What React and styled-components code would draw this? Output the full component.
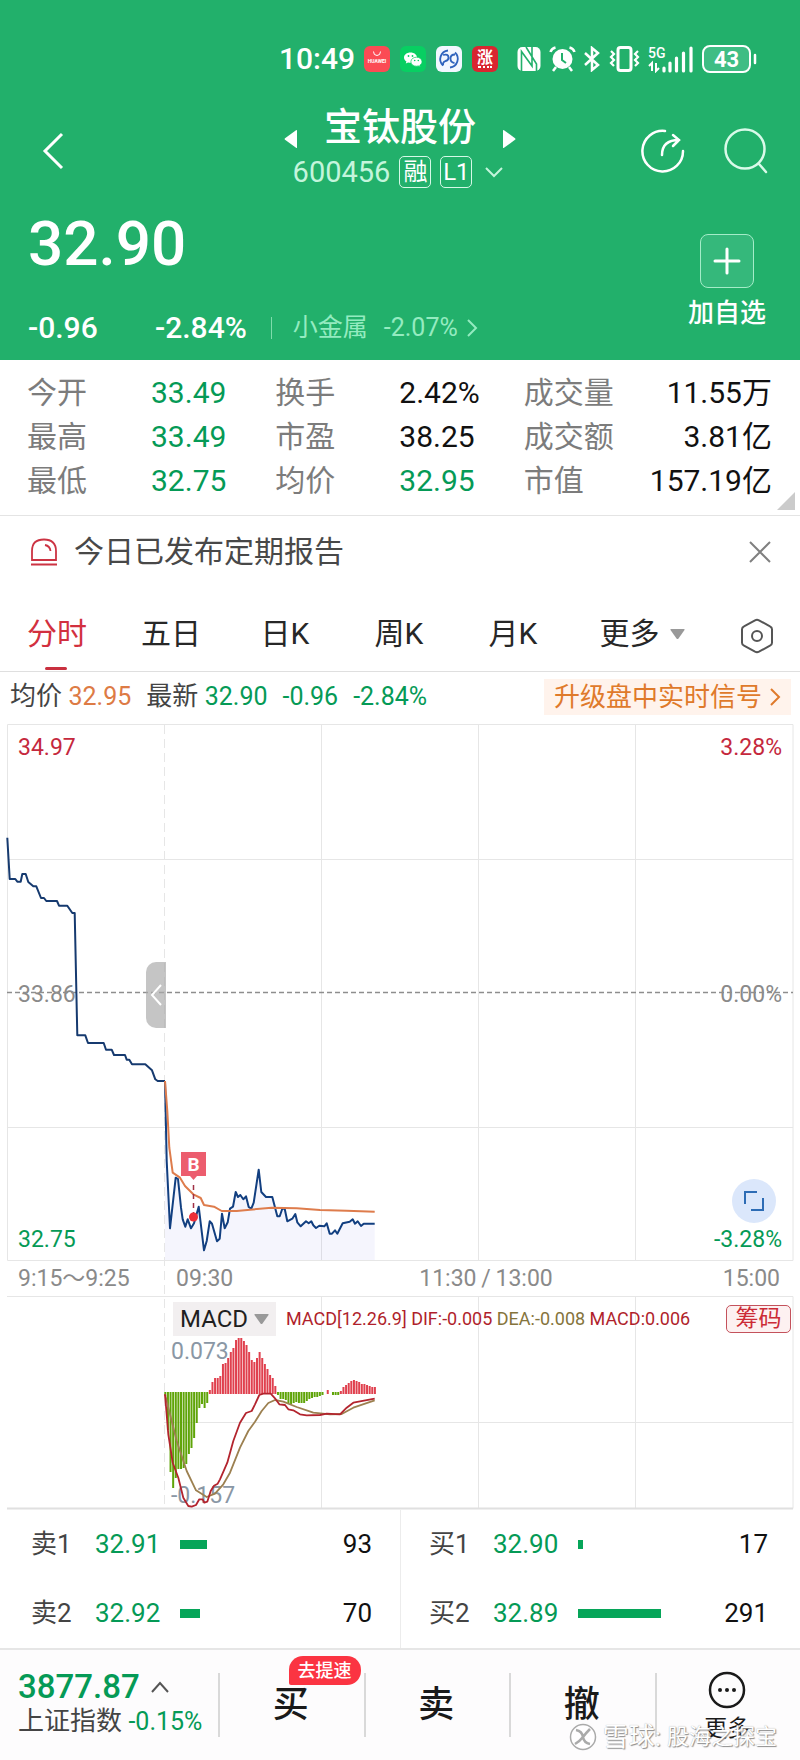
import React from 'react'
import styled, { createGlobalStyle } from 'styled-components'

const GREEN = `#059a56`
const RED = `#c5283d`
const FONT = `Roboto, "Noto Sans CJK SC", sans-serif`

const GlobalStyle = createGlobalStyle`
  * {
    box-sizing: border-box;
  }
  body {
    margin: 0;
    background: #fff;
    color: #1f1f1f;
    font-family: ${FONT};
  }
  button {
    margin: 0;
    padding: 0;
    border: 0;
    background: none;
    color: inherit;
    font: inherit;
    cursor: pointer;
  }
  a {
    color: inherit;
    text-decoration: none;
  }
  svg {
    display: block;
    flex: none;
  }
`

/* ---------- header ---------- */

const Header = styled.header`
  background: #22b06b;
  color: #fff;
`

const StatusBar = styled.div`
  display: flex;
  align-items: center;
  justify-content: flex-end;
  height: 102px;
  padding: 16px 43px 0 0;
`

const Clock = styled.time`
  margin-right: 9px;
  font-size: 30px;
  font-weight: 500;
  line-height: 32px;
`

const AppTiles = styled.div`
  display: flex;
  gap: 10px;
  margin-right: 19px;
`

const SystemIcons = styled.div`
  display: flex;
  align-items: center;
  gap: 8px;
`

const TitleBar = styled.div`
  display: grid;
  grid-template-columns: 1fr auto 1fr;
  align-items: center;
  min-height: 98px;
  padding: 0 31px;
`

const BackButton = styled.button`
  justify-self: start;
  padding-left: 11px;
`

const StockTitle = styled.div`
  align-self: start;
`

const NameRow = styled.div`
  display: flex;
  align-items: flex-end;
  justify-content: center;
  gap: 26px;

  h1 {
    margin: 0;
    font-size: 38px;
    font-weight: 500;
    line-height: 50px;
  }
  button {
    padding-bottom: 3px;
  }
`

const CodeRow = styled.div`
  display: flex;
  align-items: center;
  justify-content: center;
  gap: 9px;
  margin-top: 4px;
  color: #c4f5dc;
  font-size: 29px;
  line-height: 32px;
`

const Tag = styled.span`
  width: 32px;
  height: 32px;
  border: 1px solid #d6f9e7;
  border-radius: 5px;
  color: #fff;
  font-size: 24px;
  line-height: 30px;
  text-align: center;
`

const TitleActions = styled.div`
  display: flex;
  gap: 38px;
  justify-self: end;
`

const PriceBar = styled.div`
  display: flex;
  justify-content: space-between;
  padding: 0 34px 12px 28px;
`

const Price = styled.div`
  font-size: 62px;
  font-weight: 500;
  line-height: 88px;
`

const ChangeRow = styled.div`
  display: flex;
  align-items: center;
  margin-top: 20px;
  font-size: 30px;
  font-weight: 500;
  line-height: 40px;
`

const Change = styled.span`
  width: 127px;
`

const SectorLink = styled.a`
  display: flex;
  align-items: center;
  gap: 16px;
  margin-left: 24px;
  padding-left: 22px;
  background: linear-gradient(#7edcab, #7edcab) no-repeat left center / 1px 22px;
  color: #94ebc0;
  font-size: 25px;
  font-weight: 400;

  svg {
    margin-left: -8px;
  }
`

const AddButton = styled.button`
  display: flex;
  flex-direction: column;
  align-items: center;
  gap: 5px;
  padding-top: 34px;
  font-size: 26px;
  font-weight: 500;
  line-height: 40px;
`

const AddBox = styled.span`
  display: grid;
  place-items: center;
  width: 54px;
  height: 54px;
  border: 1px solid #a4ecc8;
  border-radius: 8px;
  background: #35b87b;
`

/* ---------- quote table ---------- */

const Quotes = styled.dl`
  position: relative;
  display: grid;
  grid-template-columns: repeat(3, 1fr);
  margin: 0;
  padding: 11px 28px 12px 27px;
  border-bottom: 1px solid #e4e4e4;
`

const Quote = styled.div`
  display: flex;
  justify-content: ${(props) => props.$spread ? `space-between` : `flex-start`};
  font-size: 30px;
  line-height: 44px;

  dt {
    min-width: 124px;
    color: #7c7c7c;
  }
  dd {
    margin: 0;
    color: ${(props) => props.$down ? GREEN : `#111`};
  }
`

const Corner = styled.svg`
  position: absolute;
  right: 5px;
  bottom: 5px;
`

const Notice = styled.section`
  display: flex;
  align-items: center;
  gap: 16px;
  padding: 14px 29px 14px 30px;
  color: #484848;
  font-size: 30px;
  line-height: 44px;

  p {
    flex: 1;
    margin: 0;
  }
`

/* ---------- tabs ---------- */

const Tabs = styled.nav`
  display: grid;
  grid-template-columns: repeat(5, 1fr) 144px 86px;
  place-items: center;
  margin-top: 12px;
  border-bottom: 1px solid #dfdfdf;
`

const Tab = styled.button`
  position: relative;
  display: flex;
  align-items: center;
  gap: 10px;
  padding: 12px 0 15px;
  color: ${(props) => props.$active ? `#d2303f` : `#272727`};
  font-size: 30px;
  line-height: 44px;

  &::after {
    content: '';
    position: absolute;
    bottom: 1px;
    left: 18px;
    width: 22px;
    height: 3px;
    border-radius: 2px;
    background: ${(props) => props.$active ? `#c9303f` : `transparent`};
  }
`

const Legend = styled.div`
  display: flex;
  align-items: center;
  gap: 15px;
  padding: 6px 9px 6px 10px;
  color: #444;
  font-size: 26px;
  line-height: 36px;
`

const Figure = styled.span`
  color: ${(props) => props.$color || GREEN};
  font-size: 25px;
`

const UpgradeLink = styled.a`
  display: flex;
  align-items: center;
  gap: 7px;
  margin-left: auto;
  padding: 0 10px;
  background: #fff3ec;
  color: #df7a2b;
`

/* ---------- chart ---------- */

const ChartArea = styled.section`
  position: relative;
`

const ChartSvg = styled.svg`
  width: 100%;
  height: auto;
  font-family: ${FONT};
  font-size: 23px;
`

const Handle = styled.button`
  position: absolute;
  top: 241px;
  left: 146px;
  display: grid;
  place-items: center;
  width: 20px;
  height: 66px;
  border-radius: 10px 0 0 10px;
  background: rgba(170, 170, 170, 0.68);
`

const ExpandButton = styled.button`
  position: absolute;
  top: 458px;
  right: 24px;
  display: grid;
  place-items: center;
  width: 44px;
  height: 44px;
  border-radius: 50%;
  background: #dbe7fb;
`

const IndicatorButton = styled.button`
  position: absolute;
  top: 581px;
  left: 173px;
  display: flex;
  align-items: center;
  gap: 6px;
  padding: 0 7px;
  background: #f2eff0;
  font-size: 24px;
  line-height: 34px;
`

const ChipsButton = styled.button`
  position: absolute;
  top: 584px;
  right: 9px;
  width: 65px;
  border: 1px solid #c4525c;
  border-radius: 5px;
  background: #fdf1f1;
  color: #cc2b36;
  font-size: 23px;
  line-height: 26px;
`

/* ---------- order book ---------- */

const Book = styled.section`
  display: grid;
  grid-template-columns: 1fr 1fr;
  border-bottom: 2px solid #e6e6e6;
`

const BookSide = styled.div`
  padding: 0 ${(props) => props.$bid ? `32px 0 28px` : `28px 0 31px`};
  border-left: ${(props) => props.$bid ? `1px solid #ececec` : `0`};
`

const Order = styled.div`
  display: grid;
  grid-template-columns: 64px 85px 1fr auto;
  align-items: center;
  color: #444;
  font-size: 26px;
  line-height: 69px;
`

const OrderPrice = styled.span`
  color: ${GREEN};
`

const OrderBar = styled.span`
  height: 9px;
  background: #06a559;
`

const OrderVolume = styled.span`
  color: #111;
`

/* ---------- bottom bar ---------- */

const BottomBar = styled.footer`
  position: relative;
  display: grid;
  grid-template-columns: 218px repeat(4, 1fr);
  align-items: start;
  min-height: 111px;
  background: #fdfcfd;
`

const IndexBox = styled.div`
  padding: 18px 0 0 18px;
  color: #444;
  font-size: 26px;
  line-height: 30px;
`

const IndexValue = styled.div`
  display: flex;
  align-items: center;
  gap: 11px;
  color: ${GREEN};
  font-size: 33px;
  font-weight: 500;
  line-height: 38px;
`

const TradeButton = styled.button`
  position: relative;
  padding-top: 23px;
  background: linear-gradient(#d9d9d9, #d9d9d9) no-repeat left 23px / 2px 64px;
  color: #1a1a1a;
  font-size: 36px;
  font-weight: 500;
  line-height: 64px;
`

const SpeedBadge = styled.span`
  position: absolute;
  top: 6px;
  right: 3px;
  padding: 0 9px;
  border-radius: 14px 14px 14px 2px;
  background: #fb3442;
  color: #fff;
  font-size: 18px;
  line-height: 29px;
`

const MoreButton = styled(TradeButton)`
  display: flex;
  flex-direction: column;
  align-items: center;
  padding-top: 21px;
  font-size: 23px;
  font-weight: 400;
  line-height: 40px;
`

const Watermark = styled.div`
  position: absolute;
  right: 23px;
  bottom: 6px;
  display: flex;
  align-items: center;
  gap: 6px;
  color: #fff;
  font-size: 26px;
  line-height: 36px;
  text-shadow: 1px 1px 1px #8c8c8c, 0 0 1px #a9a9a9;

  small {
    font-size: 22px;
  }
`

/* ---------- icons ---------- */

const Chevron = ({ d, w, h, color = `currentColor`, stroke = 2 }) =>
  <svg width={w} height={h} viewBox={`0 0 ${w} ${h}`} fill="none" stroke={color} strokeWidth={stroke}>
    <path d={d} />
  </svg>

const Caret = () =>
  <svg width="15" height="10" viewBox="0 0 15 10">
    <path d="M1 0h13q1 0 .5 1L8.500 9.500q-1 1-2 0L.5 1Q0 0 1 0z" fill="#999" />
  </svg>

const Pointer = ({ flip }) =>
  <svg width="14" height="20" viewBox="0 0 14 20">
    <path d={flip ? `M1 1.500v17q0 1 1 .3l11-8q1-.8 0-1.600l-11-8q-1-.6-1 .3z` : `M13 1.500v17q0 1-1 .3L1 10.800q-1-.8 0-1.600l11-8q1-.6 1 .3z`} fill="#fff" />
  </svg>

const Tile = ({ color, children }) =>
  <svg width="26" height="26" viewBox="0 0 26 26">
    <rect width="26" height="26" rx="6" fill={color} />
    {children}
  </svg>

const StatusIcons = () =>
  <>
    <AppTiles>
      <Tile color="#fb4b54">
        <path d="M9.500 5.500q0 4 3.500 4t3.500-4" fill="none" stroke="#fff" strokeWidth="1" />
        <text x="13" y="17" fill="#fff" fontSize="5" fontWeight="700" textAnchor="middle">HUAWEI</text>
      </Tile>
      <Tile color="#08cf62">
        <path d="M10.500 6.500c-3.700 0-6.500 2.300-6.500 5.100 0 1.700.9 3 2.400 4l-.6 2 2.300-1.200c.8.200 1.600.3 2.400.3 3.600 0 6.500-2.200 6.500-5.100s-2.900-5.100-6.500-5.100z" fill="#fff" />
        <path d="M16.500 11.200c-3.200 0-5.600 2-5.600 4.500s2.400 4.500 5.600 4.500c.7 0 1.300-.1 1.900-.3l1.900 1-.5-1.700c1.400-.9 2.200-2.100 2.200-3.500 0-2.500-2.400-4.500-5.500-4.500z" fill="#fff" stroke="#08cf62" strokeWidth=".7" />
        <g fill="#08cf62">
          <circle cx="8.500" cy="10" r=".9" /><circle cx="12.500" cy="10" r=".9" />
          <circle cx="14.700" cy="14.500" r=".8" /><circle cx="18.300" cy="14.500" r=".8" />
        </g>
      </Tile>
      <Tile color="#f2f7ff">
        <g fill="none" stroke="#2f63bd" strokeWidth="1.800">
          <path d="M12 4.500A8.700 8.700 0 0 0 7 19.500M14 21.500A8.700 8.700 0 0 0 19 6.500" />
          <path d="M7 9q5.500-1.500 5.500 2.500 0 3-3 3.500-3 1-2.500 4.500M19 8.500q-4.500 0-4.500 4t4 4.500" />
        </g>
      </Tile>
      <Tile color="#d92630">
        <text x="13" y="16.500" fill="#fff" fontSize="16" fontWeight="700" textAnchor="middle">涨</text>
        <path d="M6 21h3M11 21h2M15 21h2M18 21h2" stroke="#fff" strokeWidth="2" />
      </Tile>
    </AppTiles>
    <SystemIcons>
      <svg width="24" height="26" viewBox="0 0 24 26">
        <rect x=".5" y="1" width="23" height="24" rx="5" fill="#fff" />
        <path d="M4.500 25V5.500L15 20V1M9 1l10.500 17V25" fill="none" stroke="#22b06b" strokeWidth="1.600" />
      </svg>
      <svg width="27" height="26" viewBox="0 0 27 26">
        <circle cx="13.500" cy="13" r="10" fill="#fff" />
        <path d="M13 7v7l4 3" fill="none" stroke="#22b06b" strokeWidth="2" />
        <path d="M1.500 6q1-3.500 5-4.500M25.500 6q-1-3.500-5-4.500M7 21l-3 4M20 21l3 4" fill="none" stroke="#fff" strokeWidth="2.500" />
      </svg>
      <svg width="17" height="26" viewBox="0 0 17 26" fill="none" stroke="#fff" strokeWidth="2.500">
        <path d="M1 7l13 12-6 5V2l6 5L1 19" />
      </svg>
      <svg width="31" height="26" viewBox="0 0 31 26" fill="none" stroke="#fff">
        <rect x="9" y="1.500" width="13" height="23" rx="2.500" strokeWidth="3" />
        <path d="M2 5l3 3-3 3 3 3-3 3 3 3M29 5l-3 3 3 3-3 3 3 3-3 3" strokeWidth="2.200" />
      </svg>
      <svg width="46" height="27" viewBox="0 0 46 27">
        <text x="0" y="12" fill="#fff" fontSize="14" fontWeight="500">5G</text>
        <path d="M4 25v-8l-3 3M8 17v8l3-3" fill="none" stroke="#fff" strokeWidth="2" />
        <path d="M16 25v-3M22 25v-8M28.500 25V12M35.500 25V7M43 25V2" fill="none" stroke="#fff" strokeWidth="3.200" strokeLinecap="round" />
      </svg>
      <svg width="55" height="28" viewBox="0 0 55 28">
        <rect x="1" y="1" width="47" height="26" rx="7" fill="#3fbd84" stroke="#fff" strokeWidth="2" />
        <path d="M53 10v8" stroke="#fff" strokeWidth="2.500" strokeLinecap="round" />
        <text x="24.500" y="22" fill="#fff" fontSize="22" fontWeight="700" textAnchor="middle">43</text>
      </svg>
    </SystemIcons>
  </>

/* ---------- data ---------- */

const QUOTES = [
  { label: `今开`, value: `33.49`, down: true },
  { label: `换手`, value: `2.42%` },
  { label: `成交量`, value: `11.55万` },
  { label: `最高`, value: `33.49`, down: true },
  { label: `市盈`, value: `38.25` },
  { label: `成交额`, value: `3.81亿` },
  { label: `最低`, value: `32.75`, down: true },
  { label: `均价`, value: `32.95`, down: true },
  { label: `市值`, value: `157.19亿` }
]

const ASKS = [
  { label: `卖1`, price: `32.91`, volume: 93 },
  { label: `卖2`, price: `32.92`, volume: 70 }
]

const BIDS = [
  { label: `买1`, price: `32.90`, volume: 17 },
  { label: `买2`, price: `32.89`, volume: 291 }
]

const AUCTION = `7.3,116.7 9.7,158 15.3,158 17.3,160.7 20.7,160.7 22.3,153 25.7,153 28.3,161 33.3,165.3 36.3,165.3
  41,177 44,177 46.3,180 57,180 59,184.7 67.3,184.7 72.3,192 74.7,192 77.3,314.3 85.3,314.3 88,322 103.7,322
  106,328.7 111.7,328.7 114,334 125,334 126.7,338.7 129.3,338.7 132,343.3 145.3,343.3 152,349.3 155.3,358.3
  157.7,360 165,360`

const PRICE = `165,360 166.7,440 170,507.3 175.7,456.7 178,458 181,486.7 182.7,498.3 185.3,505.7 187.7,498.3
  191,507.3 194,502.3 198.7,485.7 204,529.3 206.7,520 209.7,500.3 212,502.7 217,520.3 219.7,517.7 222,492.7
  224.7,507.3 227.7,501.3 230,487.7 233,485.7 235.7,471 238,476 240.3,474 243.3,478.3 246,475.3 248.7,486
  251.3,487.7 253.7,481.7 258.7,448.7 261.3,471 266,476 272.3,476 277.3,495.3 279.7,495.3 282.3,487.7
  284.7,487.7 287.3,500.3 292.3,497.7 295.3,493 297.3,501.3 300.7,505.3 306,500.3 308.7,502.3 311.3,500.3
  313.3,504.3 316,507 319.3,504.7 324.3,505.3 326.7,502.3 329.7,512.7 332,512.7 335,509.3 337.3,512.7
  342.7,502.3 349.7,500.7 352.7,498.3 355,502.7 357.7,500.3 361,505 363.7,502.7 374.7,502.7`

const AVERAGE = `165,360 167.3,390 169.3,426.7 172.7,451.7 180,456.7 185,465 193.3,473.3 200.7,477 204,484
  214,485.7 221.7,490 236.7,490 250,488.7 271.7,486.7 296.7,487.3 320,489 346.7,489.7 374.7,490.7`

const DIF = `165,673.3 168.3,713.3 172.7,741.7 178.3,756.7 183.3,776.7 188.3,785 191.7,785.7 196,784 199.3,778.3
  202.7,778.3 204.3,781.7 207.3,780.7 210.7,770 214,764.7 217.7,762.7 220,758.3 227.3,741.7 233.3,720 240,701.7
  246,692 251.7,690 255,683.3 259.3,674 263.3,672.7 270.7,672.7 275,677.3 279.3,683.3 285,684 288.3,688.3
  293.3,689.3 300,693.3 306.7,694.3 320,694 326.7,692.7 340,693.3 346.7,686.7 353.3,681.7 374.7,677.7`

const DEA = `165,673.3 170,693.3 176.7,720 186.7,750 196,769.3 206.7,776 215,772.7 223.3,763.3 230,751.7
  240,726.7 248.3,710 255,700.7 261.7,690 268.3,682 275,679 283.3,680.7 296.7,686 313.3,691.7 330,693.3
  341.7,693 353.3,686.7 374.7,679.3`

// histogram, one value per minute, positive is above the zero line
const HISTOGRAM = [
  -3, -37, -79, -95, -85, -76, -76, -75, -71, -61, -55, -45, -30, -15, -11, -15, -10,
  3, 11, 15, 15, 17, 29, 30, 35, 41, 45, 53, 55, 55, 52, 48, 41, 33, 31, 35, 41, 35, 29, 24, 18, 15, 7,
  -2, -6, -6, -7, -10, -11, -10, -9, -10, -10, -10, -8, -6, -5, -4, -4, -3, -2, 0, 3, 0, -2, -2, -2,
  2, 6, 8, 10, 12, 13, 12, 11, 9, 9, 8, 7, 6, 6
]

const ZERO = 672

const Chart = () =>
  <ChartSvg viewBox="0 0 800 789" role="img" aria-label="分时走势">
    <g fill="none" stroke="#e6e6e6">
      <path d="M7.500 3.500h785.500v536H7.500z" />
      <path d="M7 138.500h786M7 406.500h786M321.500 4v535M478.500 4v535M635.500 4v535" />
      <path d="M7 575.500h786v212M321.500 576v211M478.500 576v211M635.500 576v211M164 701.500h629" />
      <path d="M164.500 4v784" strokeDasharray="9 5" />
    </g>
    <path d="M7 787.500h786" stroke="#e0e0e0" strokeWidth="2" />

    <g fill="#8a8a8a">
      <text x="18" y="281">33.86</text>
      <text x="782" y="281" textAnchor="end">0.00%</text>
      <text x="18" y="565">9:15～9:25</text>
      <text x="176" y="565">09:30</text>
      <text x="486" y="565" textAnchor="middle">11:30{`\u2009`}/{`\u2009`}13:00</text>
      <text x="780" y="565" textAnchor="end">15:00</text>
    </g>
    <g fill={RED}>
      <text x="18" y="34">34.97</text>
      <text x="782" y="34" textAnchor="end">3.28%</text>
    </g>
    <g fill={GREEN}>
      <text x="18" y="526">32.75</text>
      <text x="782" y="526" textAnchor="end">-3.28%</text>
    </g>
    <path d="M7 271.500h786" stroke="#8e8e8e" strokeWidth="1.500" strokeDasharray="5 3" />

    <polygon points={`${PRICE} 374.7,539 165,539`} fill="#5a5adc" fillOpacity=".06" />
    <g fill="none" strokeWidth="2" strokeLinejoin="round">
      <polyline points={AUCTION} stroke="#163a6f" />
      <polyline points={PRICE} stroke="#123f80" />
      <polyline points={AVERAGE} stroke="#de7c4c" />
    </g>

    <path d="M193.500 464v28" stroke="#a03045" strokeWidth="1.500" strokeDasharray="5 4" />
    <circle cx="193.500" cy="496" r="4.500" fill="#ee2f36" />
    <path d="M181 431h25v24h-9l-3.500 4-3.500-4h-9z" fill="#ec5d6e" />
    <text x="193.500" y="450" fill="#fff" fontSize="19" fontWeight="700" textAnchor="middle">B</text>

    <g fill="#8a97a5">
      <text x="171" y="638">0.073</text>
      <text x="171" y="782">-0.157</text>
    </g>
    {HISTOGRAM.map((value, i) =>
      <rect
        key={i}
        x={164.300 + i * 2.620}
        y={value > 0 ? ZERO - value : ZERO - 1}
        width="2"
        height={value ? Math.abs(value) + 1 : 0}
        fill={value > 0 ? `#e0404e` : `#5fa408`}
      />
    )}
    <g fill="none" strokeWidth="1.800" strokeLinejoin="round">
      <polyline points={DEA} stroke="#9c8050" />
      <polyline points={DIF} stroke="#b3242e" />
    </g>
    <text x="286" y="604" fill="#b01f2c" fontSize="18">
      MACD[12.26.9] DIF:-0.005 <tspan fill="#85743c">DEA:-0.008</tspan> MACD:0.006
    </text>
  </ChartSvg>

const OrderRow = ({ label, price, volume }) =>
  <Order>
    <span>{label}</span>
    <OrderPrice>{price}</OrderPrice>
    <OrderBar style={{ width: `${Math.round(volume * 0.286)}px` }} />
    <OrderVolume>{volume}</OrderVolume>
  </Order>

const App = () =>
  <>
    <GlobalStyle />
    <Header>
      <StatusBar>
        <Clock>10:49</Clock>
        <StatusIcons />
      </StatusBar>
      <TitleBar>
        <BackButton aria-label="返回">
          <Chevron w={22} h={38} d="M20 2L3 19l17 17" stroke={3} />
        </BackButton>
        <StockTitle>
          <NameRow>
            <button aria-label="上一只"><Pointer /></button>
            <h1>宝钛股份</h1>
            <button aria-label="下一只"><Pointer flip /></button>
          </NameRow>
          <CodeRow>
            <span>600456</span>
            <Tag>融</Tag>
            <Tag>L1</Tag>
            <Chevron w={26} h={12} d="M5 2l8 8 8-8" />
          </CodeRow>
        </StockTitle>
        <TitleActions>
          <button aria-label="分享">
            <svg width="44" height="46" viewBox="0 0 44 46" fill="none" stroke="#fff" strokeWidth="2.500" strokeLinecap="round">
              <path d="M24 3A20.300 20.300 0 1 0 42 23" />
              <path d="M21 27q0-15 17-15M32 7l6 5-6 6" />
            </svg>
          </button>
          <button aria-label="搜索">
            <svg width="46" height="46" viewBox="0 0 46 46" fill="none" stroke="#d9fae9" strokeWidth="2.500" strokeLinecap="round">
              <circle cx="22" cy="21" r="19.500" />
              <path d="M36 36l7 8" />
            </svg>
          </button>
        </TitleActions>
      </TitleBar>
      <PriceBar>
        <div>
          <Price>32.90</Price>
          <ChangeRow>
            <Change>-0.96</Change>
            <span>-2.84%</span>
            <SectorLink href="#sector">
              <span>小金属</span>
              <span>-2.07%</span>
              <Chevron w={12} h={20} d="M2 2l8 8-8 8" />
            </SectorLink>
          </ChangeRow>
        </div>
        <AddButton>
          <AddBox>
            <svg width="28" height="28" viewBox="0 0 28 28" stroke="#fff" strokeWidth="3" strokeLinecap="round">
              <path d="M14 2v24M2 14h24" />
            </svg>
          </AddBox>
          加自选
        </AddButton>
      </PriceBar>
    </Header>

    <Quotes>
      {QUOTES.map((quote, i) =>
        <Quote key={quote.label} $down={quote.down} $spread={i % 3 === 2}>
          <dt>{quote.label}</dt>
          <dd>{quote.value}</dd>
        </Quote>
      )}
      <Corner width="18" height="18" viewBox="0 0 18 18"><path d="M18 0v18H0z" fill="#cbcbcb" /></Corner>
    </Quotes>

    <Notice>
      <svg width="28" height="28" viewBox="0 0 28 28" fill="none" stroke="#cc3343" strokeWidth="1.800">
        <path d="M2 22V13Q2 1.500 14 1.500T26 13v9zM1 26.500h26" />
        <path d="M15 7q5 1 5.500 6" />
      </svg>
      <p>今日已发布定期报告</p>
      <button aria-label="关闭">
        <Chevron w={22} h={22} d="M1 1l20 20M21 1L1 21" color="#808080" />
      </button>
    </Notice>

    <Tabs>
      <Tab $active>分时</Tab>
      <Tab>五日</Tab>
      <Tab>日K</Tab>
      <Tab>周K</Tab>
      <Tab>月K</Tab>
      <Tab>更多<Caret /></Tab>
      <button aria-label="设置">
        <svg width="34" height="36" viewBox="0 0 34 36" fill="none" stroke="#555" strokeWidth="2">
          <path d="M15 2.300q2-1 4 0l11 6q2 1 2 3v13.400q0 2-2 3l-11 6q-2 1-4 0l-11-6q-2-1-2-3V11.300q0-2 2-3z" />
          <circle cx="17" cy="18" r="5" />
        </svg>
      </button>
    </Tabs>

    <Legend>
      <span>均价 <Figure $color="#dd7b45">32.95</Figure></span>
      <span>最新 <Figure>32.90</Figure></span>
      <Figure>-0.96</Figure>
      <Figure>-2.84%</Figure>
      <UpgradeLink href="#upgrade">
        升级盘中实时信号
        <Chevron w={12} h={20} d="M2 2l8 8-8 8" />
      </UpgradeLink>
    </Legend>

    <ChartArea>
      <Chart />
      <Handle aria-label="收起">
        <Chevron w={12} h={22} d="M11 1L2 11l9 10" color="#fff" />
      </Handle>
      <ExpandButton aria-label="全屏">
        <Chevron w={22} h={22} d="M2 14V2h12M20 8v12H8" color="#2d6cb5" />
      </ExpandButton>
      <IndicatorButton>MACD<Caret /></IndicatorButton>
      <ChipsButton>筹码</ChipsButton>
    </ChartArea>

    <Book>
      <BookSide>
        {ASKS.map((order) => <OrderRow key={order.label} {...order} />)}
      </BookSide>
      <BookSide $bid>
        {BIDS.map((order) => <OrderRow key={order.label} {...order} />)}
      </BookSide>
    </Book>

    <BottomBar>
      <IndexBox>
        <IndexValue>
          3877.87
          <Chevron w={18} h={12} d="M1 11l8-9 8 9" color="#555" />
        </IndexValue>
        上证指数 <Figure>-0.15%</Figure>
      </IndexBox>
      <TradeButton>买<SpeedBadge>去提速</SpeedBadge></TradeButton>
      <TradeButton>卖</TradeButton>
      <TradeButton>撤</TradeButton>
      <MoreButton>
        <svg width="38" height="38" viewBox="0 0 38 38">
          <circle cx="19" cy="19" r="17" fill="none" stroke="#1a1a1a" strokeWidth="2.500" />
          <g fill="#1a1a1a"><circle cx="12" cy="19" r="2" /><circle cx="19" cy="19" r="2" /><circle cx="26" cy="19" r="2" /></g>
        </svg>
        更多
      </MoreButton>
      <Watermark>
        <svg width="28" height="28" viewBox="0 0 28 28" fill="none" stroke="#aaa" strokeWidth="1.500">
          <circle cx="14" cy="14" r="12.500" fill="#fff" fillOpacity=".7" />
          <path d="M7 7q6 1 7 7t7 7M21 6q-4 4-7 8t-8 7" strokeWidth="2.500" />
        </svg>
        <span>雪球:</span>
        <small>股海之探宝</small>
      </Watermark>
    </BottomBar>
  </>

export default App
